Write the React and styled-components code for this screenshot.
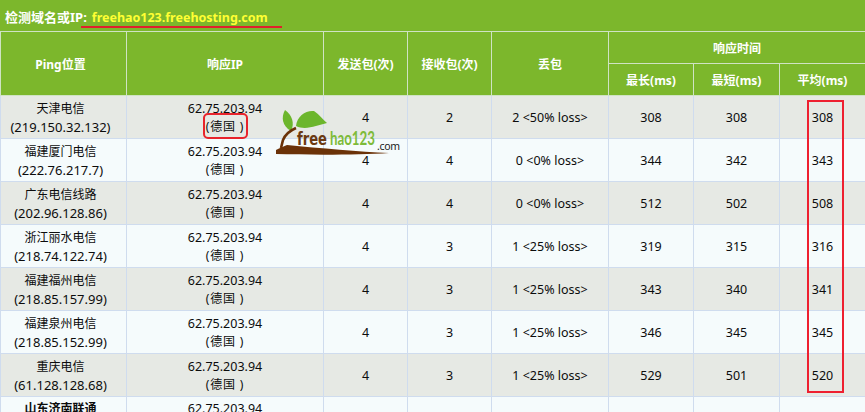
import React from 'react';
import styled, { createGlobalStyle } from 'styled-components';

const Global = createGlobalStyle`
  html, body { margin: 0; padding: 0; background: #fff; overflow: hidden; }
  #root { width: 865px; height: 412px; overflow: hidden; }
`;

const FONT = `"Noto Sans", "Noto Sans CJK SC", sans-serif`;

const Page = styled.div`
  position: relative;
  width: 865px;
  height: 412px;
  overflow: hidden;
  font-family: ${FONT};
  font-size: 12.5px;
  color: #0c0c0c;
`;

const TopBar = styled.div`
  height: 31px;
  box-sizing: border-box;
  background: #7cb72c;
  color: #fff;
  font-weight: 700;
  font-size: 13px;
  line-height: 18px;
  padding: 8px 0 0 5px;
  white-space: nowrap;
`;

const Domain = styled.span`
  color: #ffff33;
  font-size: 12.5px;
  margin-left: 5px;
`;

const Table = styled.table`
  width: 865px;
  table-layout: fixed;
  border-collapse: collapse;
`;

const Head = styled.th`
  background: #7cb72c;
  color: #fff;
  font-weight: 700;
  font-size: 12px;
  text-align: center;
  padding: 0 ${p => (p.$lead ? '6px' : '0')} 0 0;
  height: 32px;
  border: 1px solid #cfe3c4;
  box-sizing: border-box;
`;

const Row = styled.tr`
  background: ${p => (p.$odd ? '#e6e9e4' : '#f5fbfc')};
  height: 43px;
`;

const Cell = styled.td`
  text-align: center;
  padding: ${p => (p.$top ? '3px' : '2px')} ${p => (p.$lead ? '6px' : '0')} 0 0;
  height: 43px;
  line-height: 18px;
  border: 1px solid #cfdcee;
  box-sizing: border-box;
  vertical-align: ${p => (p.$top ? 'top' : 'middle')};
  white-space: nowrap;
`;

const Place = styled.span`
  display: block;
  font-size: 12px;
  font-weight: ${p => (p.$bold ? 700 : 400)};
`;

const Region = styled.span`
  display: block;
  font-size: 12px;
  letter-spacing: 0.8px;
`;

const Addr = styled.span`
  display: block;
  font-size: 13px;
`;

const Ip = styled.span`
  display: block;
  font-size: 12.5px;
`;

const Underline = styled.div`
  position: absolute;
  left: 81px;
  top: 26px;
  width: 201px;
  height: 2px;
  background: #e0202c;
`;

const IpMark = styled.div`
  position: absolute;
  left: 203px;
  top: 113px;
  width: 45px;
  height: 26px;
  box-sizing: border-box;
  border: 2px solid #e8242c;
  border-radius: 5px;
`;

const AvgMark = styled.div`
  position: absolute;
  left: 807px;
  top: 100px;
  width: 37px;
  height: 293px;
  box-sizing: border-box;
  border: 2px solid #ee2030;
`;

const Logo = styled.svg`
  position: absolute;
  left: 270px;
  top: 105px;
  width: 135px;
  height: 55px;
`;

const rows = [
  ['天津电信', '(219.150.32.132)', '2', '2 <50% loss>', '308', '308', '308'],
  ['福建厦门电信', '(222.76.217.7)', '4', '0 <0% loss>', '344', '342', '343'],
  ['广东电信线路', '(202.96.128.86)', '4', '0 <0% loss>', '512', '502', '508'],
  ['浙江丽水电信', '(218.74.122.74)', '3', '1 <25% loss>', '319', '315', '316'],
  ['福建福州电信', '(218.85.157.99)', '3', '1 <25% loss>', '343', '340', '341'],
  ['福建泉州电信', '(218.85.152.99)', '3', '1 <25% loss>', '346', '345', '345'],
  ['重庆电信', '(61.128.128.68)', '3', '1 <25% loss>', '529', '501', '520'],
];

const widths = [126, 197, 84, 84, 117, 85, 86, 86];

export default function App() {
  return (
    <Page>
      <Global />
      <TopBar>
        检测域名或IP:<Domain>freehao123.freehosting.com</Domain>
      </TopBar>
      <Table>
        <colgroup>
          {widths.map((w, i) => (
            <col key={i} style={{ width: w }} />
          ))}
        </colgroup>
        <thead>
          <tr>
            <Head rowSpan={2} $lead>Ping位置</Head>
            <Head rowSpan={2}>响应IP</Head>
            <Head rowSpan={2}>发送包(次)</Head>
            <Head rowSpan={2}>接收包(次)</Head>
            <Head rowSpan={2}>丢包</Head>
            <Head colSpan={3}>响应时间</Head>
          </tr>
          <tr>
            <Head>最长(ms)</Head>
            <Head>最短(ms)</Head>
            <Head>平均(ms)</Head>
          </tr>
        </thead>
        <tbody>
          {rows.map((r, i) => (
            <Row key={i} $odd={i % 2 === 0}>
              <Cell $lead><Place>{r[0]}</Place><Addr>{r[1]}</Addr></Cell>
              <Cell><Ip>62.75.203.94</Ip><Region>(德国 )</Region></Cell>
              <Cell>4</Cell>
              <Cell>{r[2]}</Cell>
              <Cell>{r[3]}</Cell>
              <Cell>{r[4]}</Cell>
              <Cell>{r[5]}</Cell>
              <Cell>{r[6]}</Cell>
            </Row>
          ))}
          <Row $odd={false}>
            <Cell $top $lead><Place $bold>山东济南联通</Place></Cell>
            <Cell $top><Ip>62.75.203.94</Ip></Cell>
            <Cell />
            <Cell />
            <Cell />
            <Cell />
            <Cell />
            <Cell />
          </Row>
        </tbody>
      </Table>
      <Underline />
      <IpMark />
      <AvgMark />
      <Logo viewBox="0 0 135 55">
        <path d="M15 5 C11 12 12 21 21 26 C25 18 22 10 15 5 Z" fill="#6cb62c" />
        <path d="M26 21 C27 11 36 5 44 6 C49 9 53 15 57 18 C47 20 36 26 26 21 Z" fill="#6cb62c" />
        <path d="M26 23 C19 26 15 30 13 35 L11 43" fill="none" stroke="#6b3208" strokeWidth="2.6" />
        <path d="M6 45 C10 43 14 41 17 40 C50 43 90 47 119 48 C90 50 40 50 6 49 Z" fill="#6b3208" />
        <text x="27" y="40" fontFamily='"DejaVu Sans", sans-serif' fontSize="17" fontWeight="700" fill="#6b3a12" textLength="30" lengthAdjust="spacingAndGlyphs">free</text>
        <text x="60" y="40" fontFamily='"Lato", sans-serif' fontSize="18" fontWeight="700" fill="#7ebb3a" textLength="45" lengthAdjust="spacingAndGlyphs">hao123</text>
        <text x="107" y="45" fontFamily='"Noto Sans", sans-serif' fontSize="10.5" fill="#222" textLength="23">.com</text>
      </Logo>
    </Page>
  );
}
